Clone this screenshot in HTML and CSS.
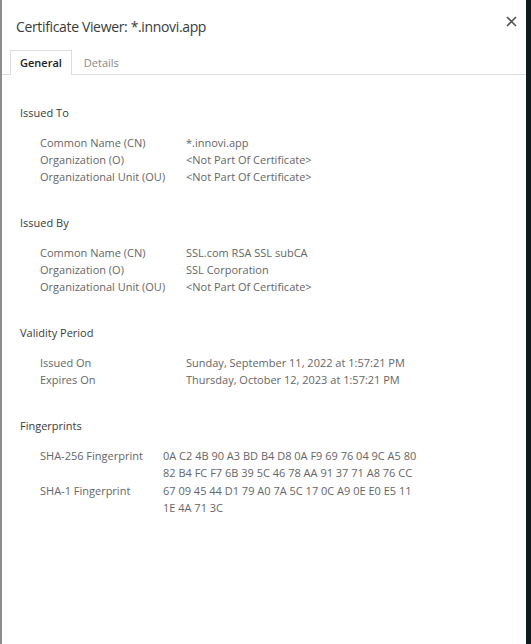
FILE: index.html
```html
<!DOCTYPE html>
<html>
<head>
<meta charset="utf-8">
<link rel="stylesheet" href="styles.css">
</head>
<body>
<div class="window">
  <div class="dialog">
    <div class="titlebar">
      <div class="title">Certificate Viewer: *.innovi.app</div>
      <div class="close">
        <svg width="11" height="11" viewBox="0 0 11 11"><path d="M1 1L10 10M10 1L1 10" stroke="#555" stroke-width="1.6" fill="none"/></svg>
      </div>
    </div>
    <div class="tabs">
      <div class="tab active">General</div>
      <div class="tab">Details</div>
    </div>
    <div class="content">
      <section class="section">
        <div class="heading">Issued To</div>
        <div class="rows">
          <div class="label">Common Name (CN)</div><div class="value">*.innovi.app</div>
          <div class="label">Organization (O)</div><div class="value">&lt;Not Part Of Certificate&gt;</div>
          <div class="label">Organizational Unit (OU)</div><div class="value">&lt;Not Part Of Certificate&gt;</div>
        </div>
      </section>
      <section class="section">
        <div class="heading">Issued By</div>
        <div class="rows">
          <div class="label">Common Name (CN)</div><div class="value">SSL.com RSA SSL subCA</div>
          <div class="label">Organization (O)</div><div class="value">SSL Corporation</div>
          <div class="label">Organizational Unit (OU)</div><div class="value">&lt;Not Part Of Certificate&gt;</div>
        </div>
      </section>
      <section class="section">
        <div class="heading">Validity Period</div>
        <div class="rows">
          <div class="label">Issued On</div><div class="value">Sunday, September 11, 2022 at 1:57:21 PM</div>
          <div class="label">Expires On</div><div class="value">Thursday, October 12, 2023 at 1:57:21 PM</div>
        </div>
      </section>
      <section class="section">
        <div class="heading">Fingerprints</div>
        <div class="rows fp">
          <div class="label">SHA-256 Fingerprint</div><div class="value">0A C2 4B 90 A3 BD B4 D8 0A F9 69 76 04 9C A5 80<br>82 B4 FC F7 6B 39 5C 46 78 AA 91 37 71 A8 76 CC</div>
          <div class="label">SHA-1 Fingerprint</div><div class="value">67 09 45 44 D1 79 A0 7A 5C 17 0C A9 0E E0 E5 11<br>1E 4A 71 3C</div>
        </div>
      </section>
    </div>
  </div>
  <div class="edge"></div>
</div>
</body>
</html>
```
FILE: styles.css
```css
html, body {
  margin: 0;
  padding: 0;
  background: #ffffff;
}
body {
  font-family: "Open Sans", "Noto Sans", sans-serif;
  color: #444;
}
.window {
  display: flex;
  height: 644px;
  width: 531px;
  overflow: hidden;
}
.dialog {
  flex: 1;
  border-left: 2px solid #8c8c8c;
  background: #fff;
  display: flex;
  flex-direction: column;
}
.edge {
  width: 5px;
  background: #0f1a1f;
}
.titlebar {
  display: flex;
  justify-content: space-between;
  align-items: flex-start;
  padding: 17px 9px 0 14px;
  height: 33px;
}
.title {
  font-size: 14px;
  color: #3a3a3a;
  line-height: 20px;
  letter-spacing: -0.35px;
}
.close {
  margin-top: -7px;
  width: 11px;
  height: 11px;
}
.tabs {
  display: flex;
  border-bottom: 1px solid #dcdcdc;
  padding-left: 8px;
  height: 24px;
}
.tab {
  font-size: 11px;
  line-height: 23px;
  padding: 0 11px;
  color: #888;
  border: 1px solid transparent;
  border-bottom: none;
  margin-bottom: -1px;
}
.tab.active {
  font-weight: 600;
  color: #222;
  background: #fff;
  border-color: #dcdcdc;
  padding: 0 9px;
  height: 24px;
}
.content {
  padding: 29px 0 0 18px;
}
.section {
  margin-bottom: 29px;
}
.heading {
  font-size: 11px;
  color: #3a3a3a;
  line-height: 17px;
  margin-bottom: 13px;
}
.rows {
  display: grid;
  grid-template-columns: 146px auto;
  padding-left: 20px;
  font-size: 11px;
  line-height: 17px;
  color: #666;
}
.rows.fp {
  grid-template-columns: 123px auto;
  line-height: 17.33px;
}
.label, .value {
  white-space: nowrap;
}
```
